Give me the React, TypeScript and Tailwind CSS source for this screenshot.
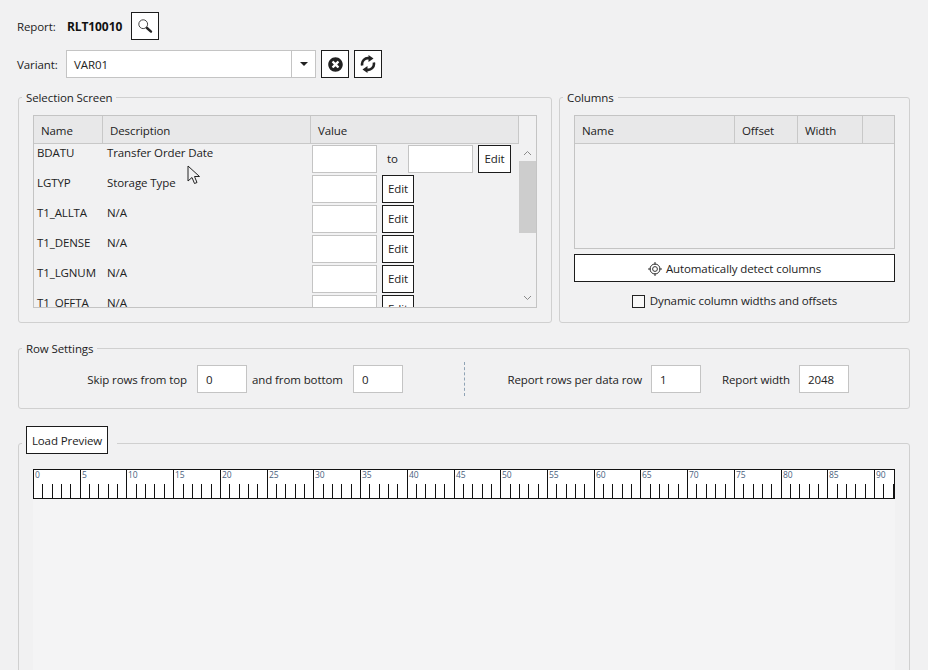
import React from "react";
import { FaTimesCircle } from "react-icons/fa";

const names = ["BDATU", "LGTYP", "T1_ALLTA", "T1_DENSE", "T1_LGNUM", "T1_OFFTA"];
const descs = ["Transfer Order Date", "Storage Type", "N/A", "N/A", "N/A", "N/A"];

function Box({ legend, className, children }: { legend: string; className: string; children: React.ReactNode }) {
  return (
    <div className={"relative rounded-[3px] border border-[#d0d0d0] " + className}>
      <span className="absolute left-[3px] top-[-8px] bg-[#f1f1f2] px-[4px] leading-[16px]">{legend}</span>
      {children}
    </div>
  );
}

function Input({ className = "", value = "" }: { className?: string; value?: string }) {
  return (
    <div className={"flex h-[28px] shrink-0 items-center border border-[#c4c4c4] bg-white px-[8px] pt-[1px] " + className}>{value}</div>
  );
}

function Btn({ className = "", children }: { className?: string; children: React.ReactNode }) {
  return (
    <div className={"flex h-[28px] shrink-0 items-center justify-center border border-[#1c1c1c] bg-white " + className}>{children}</div>
  );
}

function Th({ className, children }: { className: string; children?: React.ReactNode }) {
  return (
    <div className={"flex items-center border-r border-[#c8c8c8] pl-[7px] pt-[2px] " + className}>{children}</div>
  );
}

function Ruler() {
  const w = 860;
  const step = 9.345;
  const ticks = [];
  for (let i = 0; i * step < w; i++) {
    const x = Math.round(i * step) + 0.5;
    const major = i % 5 === 0;
    ticks.push(<line key={i} x1={x} x2={x} y1={major ? 0 : 14} y2={28} stroke="#111" strokeWidth={1} />);
    if (major)
      ticks.push(
        <text key={"t" + i} x={x + 1.5} y={8} fontSize={8.5} fill="#4a5f80" fontFamily="'Open Sans', sans-serif">
          {i}
        </text>
      );
  }
  return (
    <div className="h-[30px] w-[862px] border-y border-r border-[#111] bg-white">
      <svg width={861} height={28} className="block" viewBox="0 0 861 28">
        {ticks}
      </svg>
    </div>
  );
}

export default function App() {
  return (
    <div className="h-[670px] w-[928px] overflow-hidden bg-[#f1f1f2] pl-[17px] pt-[12px] text-[11.5px] leading-[16px] tracking-[-0.1px] text-[#222] [font-family:'Open_Sans',sans-serif]">
      <div className="flex h-[28px] items-center">
        <span className="w-[50px] pt-[1px]">Report:</span>
        <span className="w-[64px] pt-[1px] text-[12px] font-bold text-[#111]">RLT10010</span>
        <Btn className="w-[28px]">
          <svg width="16" height="16" viewBox="0 0 16 16" fill="none" stroke="#222">
            <circle cx="6.2" cy="6.2" r="4.4" strokeWidth="1" stroke="#444" />
            <path d="M10 10l4 3.6" strokeWidth="2.4" strokeLinecap="round" />
          </svg>
        </Btn>
      </div>

      <div className="mt-[10px] flex h-[28px] items-center">
        <span className="w-[49px] pt-[1px]">Variant:</span>
        <div className="flex h-[28px] w-[250px] items-center border border-[#c4c4c4] bg-white pl-[7px]">
          <span className="flex-1 pt-[1px]">VAR01</span>
          <div className="flex h-full w-[24px] items-center justify-center border-l border-[#c4c4c4]">
            <div className="h-0 w-0 border-x-[4px] border-t-[4px] border-x-transparent border-t-[#222]" />
          </div>
        </div>
        <Btn className="ml-[5px] w-[28px]">
          <FaTimesCircle size={15} color="#222" />
        </Btn>
        <Btn className="ml-[5px] w-[28px]">
          <svg width="16" height="18" viewBox="0 0 16 18" fill="none">
            <path d="M2.2 10.5A6 6 0 0 1 9.5 3.3" stroke="#222" strokeWidth="2.6" />
            <path d="M13.8 7.5A6 6 0 0 1 6.5 14.7" stroke="#222" strokeWidth="2.6" />
            <path d="M8.5 0L13.5 3.6L8.5 7z" fill="#222" />
            <path d="M7.5 11L2.5 14.4L7.5 18z" fill="#222" />
          </svg>
        </Btn>
      </div>

      <div className="ml-[1px] mt-[19px] flex gap-[7px]">
        <Box legend="Selection Screen" className="h-[226px] w-[534px] pl-[14px] pt-[17px]">
          <div className="relative h-[193px] w-[504px] overflow-hidden border border-[#c4c4c4]">
            <div className="flex h-[28px] w-[485px] border-b border-[#c8c8c8] bg-[#e8e8e9]">
              <Th className="w-[69px]">Name</Th>
              <Th className="w-[208px]">Description</Th>
              <Th className="w-[208px]">Value</Th>
            </div>
            {names.map((n, i) => (
              <div key={n} className="flex h-[30px] w-[485px]">
                <span className="w-[70px] pl-[3px] pt-[1px]">{n}</span>
                <span className="w-[208px] pl-[3px] pt-[1px]">{descs[i]}</span>
                <div className="flex items-start pt-[1px]">
                  <Input className="w-[65px]" />
                  {i === 0 ? (
                    <>
                      <span className="flex h-[28px] w-[31px] items-center justify-center">to</span>
                      <Input className="w-[65px]" />
                      <Btn className="ml-[5px] w-[33px]">Edit</Btn>
                    </>
                  ) : (
                    <Btn className="ml-[5px] w-[32px]">Edit</Btn>
                  )}
                </div>
              </div>
            ))}
            <div className="absolute right-0 top-[28px] bottom-0 w-[17px]">
              <svg className="absolute left-[4px] top-[6px]" width="9" height="6" viewBox="0 0 9 6" fill="none" stroke="#8a8a8a"><path d="M1 5l3.5-3.5L8 5" /></svg>
              <div className="absolute left-0 top-[17px] h-[72px] w-[17px] bg-[#cdcdcd]" />
              <svg className="absolute bottom-[6px] left-[4px]" width="9" height="6" viewBox="0 0 9 6" fill="none" stroke="#8a8a8a"><path d="M1 1l3.5 3.5L8 1" /></svg>
            </div>
          </div>
        </Box>

        <Box legend="Columns" className="h-[226px] w-[351px] pl-[14px] pt-[17px]">
          <div className="h-[134px] w-[321px] border border-[#c4c4c4]">
            <div className="flex h-[28px] border-b border-[#c8c8c8] bg-[#e8e8e9]">
              <Th className="w-[160px]">Name</Th>
              <Th className="w-[63px] pl-[6px]">Offset</Th>
              <Th className="w-[65px]">Width</Th>
            </div>
          </div>
          <Btn className="mt-[5px] w-[321px] gap-[4px] pt-[1px]">
            <svg width="14" height="14" viewBox="0 0 14 14" fill="none" stroke="#333" strokeWidth="1">
              <circle cx="7" cy="7" r="5" />
              <circle cx="7" cy="7" r="2.4" />
              <path d="M7 0v3M7 11v3M0 7h3M11 7h3" />
            </svg>
            <span>Automatically detect columns</span>
          </Btn>
          <div className="mt-[11px] flex w-[321px] items-center justify-center">
            <div className="h-[13px] w-[13px] border border-[#222] bg-[#f8f8f8]" />
            <span className="ml-[5px]">Dynamic column widths and offsets</span>
          </div>
        </Box>
      </div>

      <Box legend="Row Settings" className="ml-[1px] mt-[25px] flex h-[61px] w-[892px] items-center pt-[1px]">
        <span className="mr-[10px] w-[168px] pt-[1px] text-right">Skip rows from top</span>
        <Input className="w-[50px]" value="0" />
        <span className="w-[106px] pl-[5px] pt-[1px]">and from bottom</span>
        <Input className="w-[50px]" value="0" />
        <div className="ml-[61px] h-[34px] border-l border-dashed border-[#8fa3b5]" />
        <span className="mr-[9px] w-[177px] pt-[1px] text-right">Report rows per data row</span>
        <Input className="w-[50px]" value="1" />
        <span className="mr-[9px] w-[89px] pt-[1px] text-right">Report width</span>
        <Input className="w-[50px]" value="2048" />
      </Box>

      <div className="relative ml-[1px] mt-[34px] h-[300px] w-[892px] rounded-t-[3px] border border-[#d0d0d0] pl-[14px] pt-[25px]">
        <div className="absolute left-[3px] top-[-18px] bg-[#f1f1f2] pl-[4px] pr-[9px]">
          <Btn className="w-[82px] pt-[1px]">Load Preview</Btn>
        </div>
        <Ruler />
        <div className="h-[300px] w-[862px] bg-[#f4f4f5]" />
      </div>
      <svg className="absolute left-[187px] top-[165px]" width="14" height="20" viewBox="0 0 14 20" fill="#f1f1f2" stroke="#222" strokeWidth="1">
        <path d="M1 1v15l4-3.5 2.5 6 2.5-1-2.5-6H12.5z" />
      </svg>
    </div>
  );
}
